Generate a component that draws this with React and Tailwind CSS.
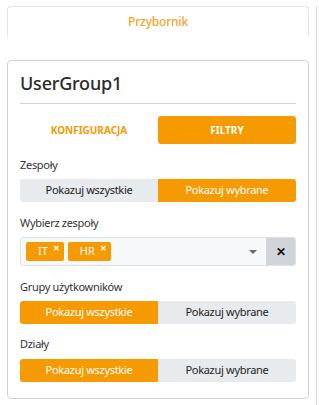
import { useState } from "react";

function Segment({ active, onChange }) {
  return (
    <div className="flex h-[23px] rounded-[3px] overflow-hidden text-[11px] tracking-[-0.3px]">
      <button
        onClick={() => onChange("all")}
        className={`flex-1 flex items-center justify-center ${
          active === "all" ? "bg-[#f59a00] text-white" : "bg-[#e8ebee] text-[#222]"
        }`}
      >
        Pokazuj wszystkie
      </button>
      <button
        onClick={() => onChange("selected")}
        className={`flex-1 flex items-center justify-center ${
          active === "selected" ? "bg-[#f59a00] text-white" : "bg-[#e8ebee] text-[#222]"
        }`}
      >
        Pokazuj wybrane
      </button>
    </div>
  );
}

function Tag({ label }) {
  return (
    <span className="relative flex items-center h-[19px] pl-[12px] pr-[16px] rounded-[2px] bg-[#f59a00] text-white text-[11px]">
      {label}
      <span className="absolute top-[1px] right-[4px] text-[8px] font-bold leading-[9px]">✕</span>
    </span>
  );
}

export default function App() {
  const [tab, setTab] = useState("filtry");
  const [zespoly, setZespoly] = useState("selected");
  const [grupy, setGrupy] = useState("all");
  const [dzialy, setDzialy] = useState("all");

  return (
    <div className="w-[317px] h-[405px] border-r border-[#d5d9de] bg-white px-[7px] font-['Noto_Sans',sans-serif] text-[#333]">

      {/* PRZYBORNIK */}
      <div className="mt-[6px] h-[31px] border-x border-t border-[#e2e5e9] rounded-t-[4px] flex items-center justify-center">
        <span className="text-[12px] text-[#f5a524] font-medium tracking-[-0.2px]">Przybornik</span>
      </div>

      {/* KARTA */}
      <div className="mt-[23px] border border-[#cfd3d8] rounded-[4px] px-[12px] pt-[10px] pb-[16px]">
        <h2 className="text-[18px] leading-[24px] font-medium text-[#2b2b2b] tracking-[-0.2px]">UserGroup1</h2>
        <div className="mt-[8px] border-t border-[#d2d6db]" />

        <div className="mt-[12px] flex h-[28px] text-[10px] font-bold">
          <button
            onClick={() => setTab("konfiguracja")}
            className={`flex-1 rounded-[3px] ${tab === "konfiguracja" ? "bg-[#f59a00] text-white" : "text-[#f59a00]"}`}
          >
            KONFIGURACJA
          </button>
          <button
            onClick={() => setTab("filtry")}
            className={`flex-1 rounded-[3px] ${tab === "filtry" ? "bg-[#f59a00] text-white" : "text-[#f59a00]"}`}
          >
            FILTRY
          </button>
        </div>

        <p className="mt-[13px] mb-[6px] text-[11px] leading-[16px] tracking-[-0.3px]">Zespoły</p>
        <Segment active={zespoly} onChange={setZespoly} />

        <p className="mt-[13px] mb-[6px] text-[11px] leading-[16px] tracking-[-0.3px]">Wybierz zespoły</p>
        <div className="flex h-[29px] border border-[#dde0e4] rounded-[3px] overflow-hidden bg-[#f7f8fa]">
          <div className="flex-1 flex items-center gap-[4px] pl-[5px]">
            <Tag label="IT" />
            <Tag label="HR" />
            <span className="ml-auto mr-[9px] w-0 h-0 border-x-[4px] border-x-transparent border-t-[4px] border-t-[#666]" />
          </div>
          <button className="w-[29px] bg-[#d1d5da] flex items-center justify-center text-[12px] font-bold text-[#111]">
            ✕
          </button>
        </div>

        <p className="mt-[13px] mb-[6px] text-[11px] leading-[16px] tracking-[-0.3px]">Grupy użytkowników</p>
        <Segment active={grupy} onChange={setGrupy} />

        <p className="mt-[12px] mb-[7px] text-[11px] leading-[16px] tracking-[-0.3px]">Działy</p>
        <Segment active={dzialy} onChange={setDzialy} />
      </div>
    </div>
  );
}
